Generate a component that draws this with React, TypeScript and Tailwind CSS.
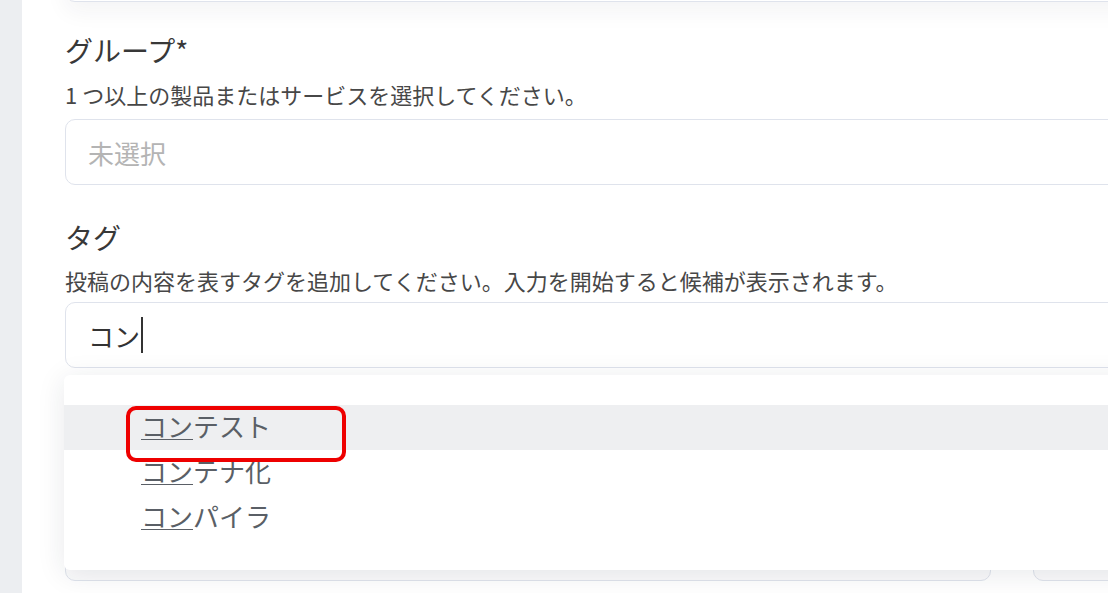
import React from "react";

const font = { fontFamily: '"Noto Sans CJK JP", "Noto Sans", sans-serif' };

export default function App() {
  return (
    <div
      className="w-[1108px] h-[593px] overflow-hidden flex bg-white"
      style={font}
    >
      <div className="w-[22px] shrink-0 bg-[#eceef1]" />
      <div className="flex-1 pl-[43px] flex flex-col">
        {/* previous field (bottom edge only visible) */}
        <div className="-mt-[64px] h-[66px] w-[1100px] rounded-[10px] border border-[#dfe3ec] bg-white shadow-[0_10px_22px_rgba(30,40,60,0.05)]" />

        {/* Group */}
        <div className="mt-[30px] text-[28px] leading-[36px] text-[#383838]">
          グループ*
        </div>
        <div className="mt-[11px] text-[22px] leading-[30px] text-[#474747]">
          1 つ以上の製品またはサービスを選択してください。
        </div>
        <div className="mt-[10px] h-[66px] w-[1100px] rounded-[10px] border border-[#dfe3ec] bg-white flex items-center pl-[22px] text-[26px] text-[#b4b4b4]">
          未選択
        </div>

        {/* Tags */}
        <div className="mt-[34px] text-[28px] leading-[36px] text-[#383838]">
          タグ
        </div>
        <div className="mt-[10px] text-[22px] leading-[30px] text-[#474747]">
          投稿の内容を表すタグを追加してください。入力を開始すると候補が表示されます。
        </div>
        <div className="relative mt-[7px] w-[1100px]">
          <div className="h-[66px] rounded-[10px] border border-[#dfe3ec] bg-white flex items-center pl-[22px] text-[26px] text-[#333333]">
            <span>コン</span>
            <span className="ml-[1px] inline-block w-[2px] h-[36px] bg-[#333333]" />
          </div>

          {/* suggestions dropdown */}
          <div className="absolute left-[-1px] top-[73px] z-10 w-[1110px] h-[195px] bg-white rounded-[6px] shadow-[0_4px_28px_rgba(30,40,60,0.10)] pt-[30px]">
            <ul className="text-[26px] leading-[41px] text-[#5a5f66]">
              <li className="h-[45px] bg-[#eeeff1] pl-[77px]">
                <u className="underline-offset-[2px] decoration-1">コン</u>テスト
              </li>
              <li className="h-[45px] pl-[77px]">
                <u className="underline-offset-[2px] decoration-1">コン</u>テナ化
              </li>
              <li className="h-[46px] pl-[77px]">
                <u className="underline-offset-[2px] decoration-1">コン</u>パイラ
              </li>
            </ul>
            <div className="absolute left-[62px] top-[31px] w-[220px] h-[56px] rounded-[10px] border-[4px] border-[#ee0000]" />
          </div>
        </div>

        {/* next row of fields (behind dropdown) */}
        <div className="mt-[147px] flex gap-[42px]">
          <div className="h-[66px] w-[926px] shrink-0 rounded-[10px] border border-[#dfe3ec] bg-[#fafafb]" />
          <div className="h-[66px] w-[300px] shrink-0 rounded-[10px] border border-[#dfe3ec] bg-[#fafafb]" />
        </div>
      </div>
    </div>
  );
}
